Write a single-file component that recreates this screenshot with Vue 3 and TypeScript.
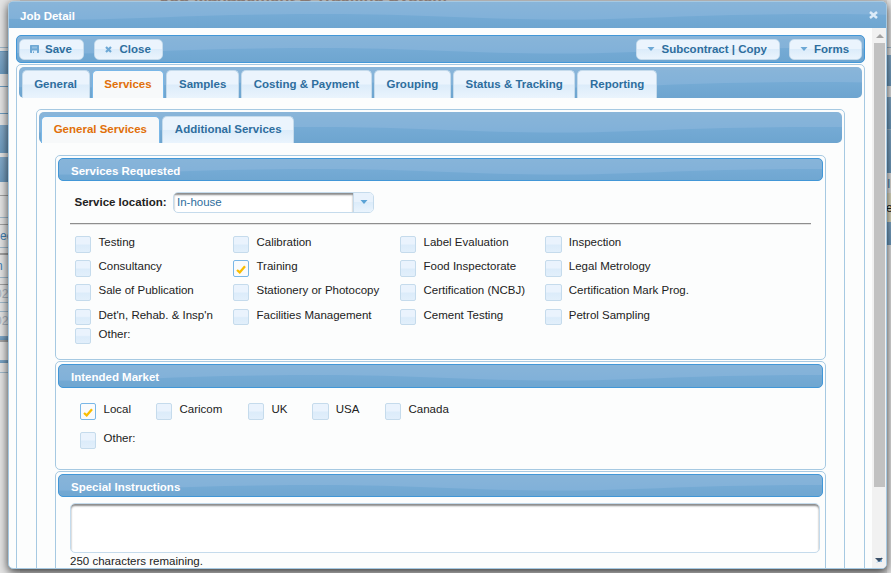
<script setup lang="ts">
import { ref } from 'vue'

interface Option { label: string; checked?: boolean }

const tabs = ['General', 'Services', 'Samples', 'Costing & Payment', 'Grouping', 'Status & Tracking', 'Reporting']
const activeTab = ref('Services')
const subTabs = ['General Services', 'Additional Services']
const activeSubTab = ref('General Services')

const services = ref<Option[][]>([
  [{ label: 'Testing' }, { label: 'Calibration' }, { label: 'Label Evaluation' }, { label: 'Inspection' }],
  [{ label: 'Consultancy' }, { label: 'Training', checked: true }, { label: 'Food Inspectorate' }, { label: 'Legal Metrology' }],
  [{ label: 'Sale of Publication' }, { label: 'Stationery or Photocopy' }, { label: 'Certification (NCBJ)' }, { label: 'Certification Mark Prog.' }],
  [{ label: "Det'n, Rehab. & Insp'n" }, { label: 'Facilities Management' }, { label: 'Cement Testing' }, { label: 'Petrol Sampling' }],
  [{ label: 'Other:' }],
])
const markets = ref<Option[]>([
  { label: 'Local', checked: true }, { label: 'Caricom' }, { label: 'UK' }, { label: 'USA' }, { label: 'Canada' },
])

// Rows of the dimmed page that show on either side of the dialog: [height, kind, text]
type Strip = [number, string, string?]
const leftRows: Strip[] = [
  [47, 'plain'], [1, 'line'], [3, 'plain'], [1, 'edge'], [21, 'bar'], [1, 'edge'], [12, 'plain'], [1, 'edge'], [26, 'plain'], [1, 'edge'],
  [11, 'plain'], [28, 'bar'], [4, 'plain'], [25, 'bar'], [13, 'plain'], [1, 'dark'], [21, 'plain'], [1, 'line'], [6, 'plain'], [1, 'dark'],
  [22, 'plain blue', 'ec'], [1, 'line'], [5, 'plain'], [2, 'dark'], [22, 'plain blue cut', 'n'], [1, 'line'], [6, 'plain'], [1, 'dark'],
  [17, 'plain faint', '02'], [1, 'line'], [8, 'plain'], [1, 'line'], [18, 'plain faint', '02'], [6, 'plain'], [4, 'bar'], [2, 'dark'],
  [18, 'plain'], [3, 'bar'], [9, 'plain'], [1, 'line'], [200, 'plain'],
]
const rightRows: Strip[] = [
  [47, 'plain'], [1, 'line'], [7, 'plain'], [31, 'bar'], [11, 'plain'], [32, 'bar'], [1, 'line'], [43, 'bar'],
  [20, 'plain blue', 'IN'], [29, 'cream', 'e'], [23, 'bar'], [328, 'plain'],
]
</script>

<template>
  <div class="page">
    <div class="strip left"><div v-for="(r, i) in leftRows" :key="i" :class="r[1]" :style="{ height: r[0] + 'px' }">{{ r[2] }}</div></div>
    <div class="strip right"><div v-for="(r, i) in rightRows" :key="i" :class="r[1]" :style="{ height: r[0] + 'px' }">{{ r[2] }}</div></div>
    <div class="app-title">Job Management &amp; Tracking System</div>

    <section class="dialog">
      <header class="titlebar wave">
        <span>Job Detail</span>
        <svg class="x" width="9" height="8" viewBox="0 0 9 8"><path d="M1 1L8 7M8 1L1 7" stroke="#dcebf8" stroke-width="2.500" /></svg>
      </header>
      <div class="body">
        <main class="content">
          <div class="toolbar wave">
            <button class="btn save">
              <svg width="9" height="8" viewBox="0 0 9 8"><path fill="#6da8d5" fill-rule="evenodd" d="M.5 0H8.500L9 .5V7.500L8.500 8H.5L0 7.500V.5ZM2 5.500V8H3V6.500H4V8H7V5.500Z" /><path d="M2 1.500H7V3.500H2Z" fill="#93c0e2" /></svg>Save
            </button>
            <button class="btn close">
              <svg width="7" height="7" viewBox="0 0 7 7"><path d="M1 1L6 6M6 1L1 6" stroke="#6da8d5" stroke-width="2.200" /></svg>Close
            </button>
            <span class="spacer" />
            <button class="btn sub"><svg width="8" height="4" viewBox="0 0 8 4"><path d="M.5 0H7.500L4 4Z" fill="#6da8d5" /></svg>Subcontract | Copy</button>
            <button class="btn forms"><svg width="8" height="4" viewBox="0 0 8 4"><path d="M.5 0H7.500L4 4Z" fill="#6da8d5" /></svg>Forms</button>
          </div>

          <div class="tabs outer">
            <nav class="nav wave">
              <a v-for="t in tabs" :key="t" class="tab" :class="{ active: t === activeTab }" @click="activeTab = t">{{ t }}</a>
            </nav>
            <div class="tabs inner">
              <nav class="nav wave">
                <a v-for="t in subTabs" :key="t" class="tab" :class="{ active: t === activeSubTab }" @click="activeSubTab = t">{{ t }}</a>
              </nav>

              <div class="panel services">
                <h3 class="head wave">Services Requested</h3>
                <div class="location">
                  <label>Service location:</label>
                  <div class="select"><span>In-house</span><i><svg width="8" height="4" viewBox="0 0 8 4"><path d="M.5 0H7.500L4 4Z" fill="#5aa3d6" /></svg></i></div>
                </div>
                <div class="rule" />
                <div class="grid">
                  <div v-for="(row, i) in services" :key="i" class="row">
                    <label v-for="o in row" :key="o.label" class="opt" @click="o.checked = !o.checked">
                      <span class="box" :class="{ on: o.checked }"><svg v-if="o.checked" width="10" height="9" viewBox="0 0 10 9"><path d="M1 5L3.700 7.400L9 1.200" fill="none" stroke="#f9bd01" stroke-width="2.300" /></svg></span><span class="txt">{{ o.label }}</span>
                    </label>
                  </div>
                </div>
              </div>

              <div class="panel market">
                <h3 class="head wave">Intended Market</h3>
                <div class="markets">
                  <label v-for="o in markets" :key="o.label" class="opt" @click="o.checked = !o.checked">
                    <span class="box" :class="{ on: o.checked }"><svg v-if="o.checked" width="10" height="9" viewBox="0 0 10 9"><path d="M1 5L3.700 7.400L9 1.200" fill="none" stroke="#f9bd01" stroke-width="2.300" /></svg></span><span class="txt">{{ o.label }}</span>
                  </label>
                </div>
                <div class="markets other"><label class="opt"><span class="box" /><span class="txt">Other:</span></label></div>
              </div>

              <div class="panel notes">
                <h3 class="head wave">Special Instructions</h3>
                <div class="area" />
                <p>250 characters remaining.</p>
              </div>
            </div>
          </div>
        </main>
        <aside class="scroll">
          <svg width="8" height="4" viewBox="0 0 8 4"><path d="M0 4L4 0L8 4Z" fill="#a3a3a3" /></svg>
          <div class="thumb" />
          <svg class="down" width="9" height="7" viewBox="0 0 9 7"><path d="M1 6L7 0V5H3" fill="#86b9e2" /><path d="M0 1H8L4 5Z" fill="#3b5068" /></svg>
        </aside>
      </div>
    </section>
  </div>
</template>

<style>
body { margin: 0; overflow: hidden; }
</style>

<style scoped>
* { box-sizing: border-box; }
.page {
  position: relative; width: 891px; height: 573px; overflow: hidden; background: #d3d3d3;
  font: 11.5px/14px "Liberation Sans", Arial, sans-serif; color: #222;
}
.strip { position: absolute; top: 0; width: 20px; line-height: 22px; font-size: 12px; }
.left { left: 0; }
.right { left: 887px; }
.strip > div { overflow: hidden; white-space: nowrap; }
.plain { background: #e4e4e4; }
.cream { background: #e0ddc3; line-height: 30px; text-indent: -1px; }
.line { background: #9fb8ca; }
.edge { background: #6c9cc0; }
.dark { background: #a0a0a0; }
.bar { background: linear-gradient(#83a9c8, #6d9abd); }
.blue { color: #407fb2; }
.cut { text-indent: -4px; }
.faint { color: #aab3bd; line-height: 19px; text-indent: -5px; }
.app-title {
  position: absolute; left: 160px; top: -14px; width: 290px; font: bold 16.500px/20px "Liberation Sans", Arial, sans-serif;
  color: #a3928b; white-space: nowrap;
}
.dialog {
  position: absolute; left: 8px; top: 1px; width: 879px; height: 568px; display: flex; flex-direction: column;
  border: 1px solid #a6c9e2; border-radius: 5px; background: #fcfdfd; overflow: hidden;
  box-shadow: 0 3px 10px rgba(0, 0, 0, .75);
}
.wave {
  background-color: #78abd4;
  background-position: 50% 50%;
  background-image: url("data:image/svg+xml,%3Csvg xmlns='http://www.w3.org/2000/svg' width='500' height='100'%3E%3Cdefs%3E%3ClinearGradient id='a' x2='0' y2='1'%3E%3Cstop offset='.3' stop-color='%238bb6d9'/%3E%3Cstop offset='.54' stop-color='%2381b1d9'/%3E%3C/linearGradient%3E%3ClinearGradient id='b' gradientUnits='userSpaceOnUse' x1='0' x2='0' y1='48' y2='70'%3E%3Cstop offset='0' stop-color='%2376abd5'/%3E%3Cstop offset='1' stop-color='%236ba3ce'/%3E%3C/linearGradient%3E%3C/defs%3E%3Cpath fill='url(%23a)' d='M0 0H500V100H0z'/%3E%3Cpath fill='url(%23b)' d='M0 51C45 49.500 90 49 130 49C220 49 280 54.500 370 54.500C415 54.500 455 52.500 500 51V100H0z'/%3E%3C/svg%3E");
}
.titlebar { flex: none; height: 26px; display: flex; align-items: center; justify-content: space-between; padding: 2px 8px 0 11px; color: #fff; font-weight: bold; }
.titlebar .x { margin-bottom: 2px; }
.body { flex: 1; min-height: 0; display: flex; }
.content { flex: 1; min-width: 0; padding: 7px 7px 0; overflow: hidden; }
.toolbar { height: 28px; display: flex; align-items: center; padding: 0 2px; border: 1px solid #4297d7; border-radius: 5px; }
.btn {
  height: 21px; display: flex; align-items: center; padding: 0 0 0 10px; white-space: nowrap; color: #2e6e9e;
  font: bold 11.5px/14px "Liberation Sans", Arial, sans-serif; border: 1px solid #c5dbec; border-radius: 5px;
  background: linear-gradient(#ebf4fd 0 45%, #dcecfa 50%, #eaf4fd);
}
.save { width: 65px; gap: 6px; }
.close { width: 69px; gap: 7.500px; margin-left: 10px; }
.sub { width: 144px; gap: 6.500px; }
.forms { width: 73px; gap: 6px; margin-left: 9px; }
.spacer { flex: 1; }
.tabs { border: 1px solid #a6c9e2; border-radius: 5px; background: #fcfdfd; }
.outer { margin-top: 1px; height: 700px; padding: 2px; }
.inner { margin: 11px 17px 0; height: 640px; padding: 2px; }
.nav { height: 31px; padding: 3px 2.500px 0; display: flex; gap: 2px; border-radius: 5px; }
.inner .nav { padding: 4px 2px 0; gap: 2.500px; }
.tab {
  height: 28px; padding: 6px 11.680px 0; border: 1px solid #c5dbec; border-bottom: 0; border-radius: 5px 5px 0 0; white-space: nowrap;
  font-weight: bold; color: #2e6e9e; background: linear-gradient(#ebf4fd 0 48%, #dcecfa 52%, #eaf4fd); cursor: pointer;
}
.inner .tab { height: 27px; padding-top: 5px; }
.tab.active { color: #e17009; border-color: #79b7e7; background: #f7f9fa; }
.panel { border: 1px solid #a6c9e2; border-radius: 5px; padding: 2px; background: #fcfdfd; margin: 0 16px 1px; }
.panel.services { margin-top: 12px; height: 205px; }
.panel.market { height: 109px; }
.panel.notes { height: 200px; }
.head { margin: 0; height: 23px; padding: 5px 12px 0; border: 1px solid #4297d7; border-radius: 5px; color: #fff; font-size: 11.5px; line-height: 14px; }
.market .head { height: 24px; }
.location { display: flex; align-items: center; height: 21px; margin: 11px 0 0 16.500px; font-weight: bold; }
.location label { width: 98.500px; white-space: nowrap; margin-top: -1px; }
.select {
  width: 201px; height: 21px; display: flex; border: 1px solid #c5dbec; border-radius: 5px; overflow: hidden; background: #fff;
  font-weight: normal; color: #2e6e9e;
}
.select span { flex: 1; padding: 2px 3px; box-shadow: inset 0 2px 2px #8a8a8a; }
.select i { width: 20px; border-left: 1px solid #c5dbec; display: flex; justify-content: center; padding-top: 7px; background: linear-gradient(#e8f2fc 0 45%, #dcecfa 50%, #eaf4fd); }
.rule { width: 741px; height: 2px; margin: 10px 0 0 12px; border-top: 1px solid #8e8e8e; border-bottom: 1px solid #e3e3e3; }
.grid { margin: 11px 0 0 17px; }
.row { display: grid; grid-template-columns: 158px 167px 145px 200px; height: 24px; }
.row:nth-child(3) { height: 25px; }
.row:nth-child(4) { height: 19px; }
.opt { display: flex; align-items: flex-start; height: 17px; }
.box {
  width: 16px; height: 17px; flex: none; display: flex; align-items: center; justify-content: center; padding-top: 2px; border: 1px solid #c5dbec; border-radius: 2px;
  background: linear-gradient(#eaf3fd 0 45%, #dcecfa 55%, #e2effb);
}
.row:nth-child(n+4) .box { height: 16px; }
.row .opt:nth-child(4) .box { width: 17px; }
.box.on { border-color: #79b7e7; background: #fafbfc; }
.txt { margin: -1px 0 0 7.500px; white-space: nowrap; }
.row .opt:nth-child(4) .txt { margin-left: 6.800px; }
.markets { display: flex; gap: 24px; margin: 15px 0 0 22px; }
.markets .opt:nth-child(1) { width: 52px; }
.markets .opt:nth-child(2) { width: 68px; }
.markets .opt:nth-child(3) { width: 40px; }
.markets .opt:nth-child(4) { width: 49px; }
.markets .opt:nth-child(4) .box { width: 17px; }
.markets .opt:nth-child(4) .txt { margin-left: 6.800px; }
.markets.other { margin-top: 12px; }
.area { width: 750px; height: 50px; margin: 6px 0 0 12px; border: 1px solid #c5dbec; border-radius: 5px; background: #fff; box-shadow: inset 0 2px 2px #8a8a8a; }
.notes p { margin: 1px 0 0 12px; }
.scroll { width: 14px; flex: none; background: #f1f1f1; display: flex; flex-direction: column; align-items: center; padding: 6px 0 4px 1px; }
.scroll svg { flex: none; }
.thumb { width: 11px; height: 444px; margin-top: 5px; background: #c1c1c1; }
.down { margin-top: auto; }
</style>
